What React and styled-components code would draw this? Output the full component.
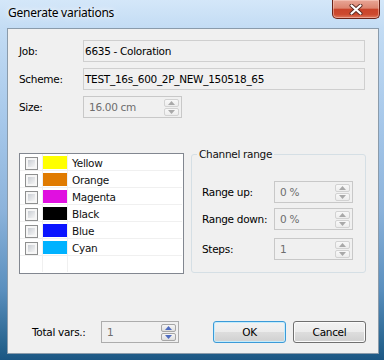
import styled, { createGlobalStyle } from 'styled-components';

const GlobalStyle = createGlobalStyle`
  html, body {
    margin: 0;
    padding: 0;
    background: #1a5582;
  }
  body {
    font-family: "DejaVu Sans", sans-serif;
    font-size: 10.5px;
    letter-spacing: -0.3px;
    color: #000;
  }
`;

const channels = [
  { name: 'Yellow', color: '#ffff00' },
  { name: 'Orange', color: '#e07b00' },
  { name: 'Magenta', color: '#e010e0' },
  { name: 'Black', color: '#000000' },
  { name: 'Blue', color: '#0a14ff' },
  { name: 'Cyan', color: '#00b2ff' },
];

const Window = styled.div`
  width: 384px;
  height: 360px;
  display: flex;
  flex-direction: column;
  overflow: hidden;
  background: linear-gradient(
    180deg,
    #d4e7f9 0px,
    #c3dcf4 28px,
    #a7c8ea 120px,
    #8cb3db 210px,
    #5a8fbe 290px,
    #27648f 345px,
    #1b5683 360px
  );
`;

const TitleBar = styled.div`
  height: 28px;
  flex-shrink: 0;
  display: flex;
  align-items: flex-start;
`;

const Title = styled.div`
  margin: 5px 0 0 8px;
  font-family: "Noto Sans", sans-serif;
  font-size: 12px;
  line-height: 16px;
  letter-spacing: -0.25px;
  text-shadow: 0 0 8px rgba(255, 255, 255, 0.9), 0 0 4px rgba(255, 255, 255, 0.8);
`;

const CloseButton = styled.div`
  margin-left: auto;
  margin-right: 4px;
  width: 48px;
  height: 19px;
  box-sizing: border-box;
  border: 1px solid #6a2318;
  border-top: none;
  border-radius: 0 0 5px 5px;
  background: linear-gradient(180deg, #e8a696 0%, #dc8570 45%, #c9442b 52%, #cd4a2f 80%, #de7a60 100%);
  box-shadow: inset 0 0 0 1px rgba(255, 220, 210, 0.45);
  display: flex;
  align-items: center;
  justify-content: center;
`;

const Client = styled.div`
  flex: 1;
  margin: 0 5px 6px 7px;
  border: 1px solid #8a9bab;
  background: #f0f0f0;
  display: flex;
  flex-direction: column;
  padding: 11px 12px 10px 11px;
`;

const FormGrid = styled.div`
  display: grid;
  grid-template-columns: 64px 1fr;
  row-gap: 6px;
  align-items: center;
`;

const Label = styled.div`
  line-height: 14px;
  width: ${p => (p.$w ? `${p.$w}px` : 'auto')};
  flex-shrink: 0;
`;

const ReadField = styled.div`
  height: 22px;
  box-sizing: border-box;
  border: 1px solid #cfcfcf;
  background: #f0f0f0;
  display: flex;
  align-items: center;
  padding-left: 1px;
  line-height: 14px;
  margin-right: 1px;
`;

const SpinField = styled.div`
  height: 22px;
  width: ${p => p.$w}px;
  box-sizing: border-box;
  border: 1px solid ${p => (p.$active ? '#acacac' : '#c8c8c8')};
  background: #f0f0f0;
  display: flex;
  align-items: center;
  padding-left: 5px;
  flex-shrink: 0;
`;

const SpinValue = styled.span`
  color: #6d6d6d;
  line-height: 14px;
`;

const SpinButtons = styled.div`
  margin-left: auto;
  margin-right: 2px;
  display: flex;
  flex-direction: column;
  gap: 1px;
`;

const SpinBtn = styled.div`
  width: 15px;
  height: 8px;
  box-sizing: border-box;
  border: 1px solid ${p => (p.$active ? '#a6a6a6' : '#d2d2d2')};
  border-radius: 2px;
  background: ${p =>
    p.$active ? 'linear-gradient(#f6f6f6, #dedede)' : 'linear-gradient(#f8f8f8, #ededed)'};
  display: flex;
  align-items: center;
  justify-content: center;
`;

const Arrow = ({ up, active }) => (
  <svg width="7" height="4" viewBox="0 0 7 4">
    <path d={up ? 'M0 4 L3.5 0 L7 4 Z' : 'M0 0 L7 0 L3.5 4 Z'} fill={active ? '#4f6cc0' : '#a9a9a9'} />
  </svg>
);

const Spin = ({ value, w, active }) => (
  <SpinField $w={w} $active={active}>
    <SpinValue>{value}</SpinValue>
    <SpinButtons>
      <SpinBtn $active={active}>
        <Arrow up active={active} />
      </SpinBtn>
      <SpinBtn $active={active}>
        <Arrow active={active} />
      </SpinBtn>
    </SpinButtons>
  </SpinField>
);

const Middle = styled.div`
  display: flex;
  gap: 7px;
  margin-top: 30px;
  align-items: flex-start;
`;

const ListBox = styled.div`
  width: 165px;
  height: 121px;
  margin-top: 5px;
  box-sizing: border-box;
  border: 1px solid #828790;
  background: #fff;
  display: flex;
  flex-direction: column;
`;

const ListRow = styled.div`
  display: grid;
  grid-template-columns: 23px 25px 1fr;
  height: ${p => (p.$filler ? 'auto' : '17px')};
  flex: ${p => (p.$filler ? 1 : 'none')};
  box-sizing: border-box;
  border-bottom: 1px solid ${p => (p.$filler ? 'transparent' : '#f0f0f0')};
  margin-right: 1px;
`;

const Cell = styled.div`
  border-right: ${p => (p.$line ? '1px solid #f0f0f0' : 'none')};
  display: flex;
  align-items: flex-start;
`;

const Check = styled.span`
  width: 13px;
  height: 13px;
  box-sizing: border-box;
  margin: 3px 0 0 5px;
  border: 1px solid #8e8f8f;
  padding: 2px;
  background: linear-gradient(135deg, #c9cdd3, #f5f5f5) content-box, #f6f6f6;
`;

const Swatch = styled.span`
  width: 24px;
  height: 13px;
  margin-top: 2px;
  background: ${p => p.$color};
`;

const ChannelName = styled.span`
  padding: 2px 0 0 4px;
  line-height: 14px;
  color: #111;
`;

const Group = styled.fieldset`
  flex: 1;
  height: 125px;
  margin: 0;
  padding: 0;
  min-width: 0;
  box-sizing: border-box;
  border: 1px solid #d5dfe5;
  border-radius: 3px;
`;

const Legend = styled.legend`
  margin-left: 5px;
  padding: 0 2px;
  line-height: 13px;
  color: #111;
`;

const GroupBody = styled.div`
  padding: 20px 0 0 10px;
  display: flex;
  flex-direction: column;
  gap: 5px;
`;

const GroupRow = styled.div`
  display: flex;
  align-items: center;
  margin-top: ${p => p.$mt || 0}px;
`;

const Footer = styled.div`
  margin-top: auto;
  display: flex;
  align-items: center;
  padding-left: 13px;
`;

const Button = styled.div`
  width: 73px;
  height: 22px;
  box-sizing: border-box;
  border: 1px solid ${p => (p.$default ? '#3b9ad8' : '#707070')};
  border-radius: 3px;
  box-shadow: inset 0 0 0 1px ${p => (p.$default ? '#c4ecfc' : '#fbfbfb')};
  background: linear-gradient(180deg, #f3f3f3 0%, #ececec 48%, #dddddd 52%, #d0d0d0 100%);
  display: flex;
  align-items: center;
  justify-content: center;
  line-height: 14px;
  margin-left: ${p => (p.$push ? 'auto' : '7px')};
`;

export default function App() {
  return (
    <>
      <GlobalStyle />
      <Window>
        <TitleBar>
          <Title>Generate variations</Title>
          <CloseButton>
            <svg width="14" height="11" viewBox="0 0 14 11">
              <path d="M2.5 1.5 L11.5 9.5 M11.5 1.5 L2.5 9.5" stroke="#5a2a22" strokeWidth="4" strokeLinecap="round" />
              <path d="M2.5 1.5 L11.5 9.5 M11.5 1.5 L2.5 9.5" stroke="#ffffff" strokeWidth="2.2" strokeLinecap="round" />
            </svg>
          </CloseButton>
        </TitleBar>
        <Client>
          <FormGrid>
            <Label>Job:</Label>
            <ReadField>6635 - Coloration</ReadField>
            <Label>Scheme:</Label>
            <ReadField>TEST_16s_600_2P_NEW_150518_65</ReadField>
            <Label>Size:</Label>
            <Spin value="16.00 cm" w={99} />
          </FormGrid>

          <Middle>
            <ListBox>
              {channels.map(c => (
                <ListRow key={c.name}>
                  <Cell $line>
                    <Check />
                  </Cell>
                  <Cell $line>
                    <Swatch $color={c.color} />
                  </Cell>
                  <Cell>
                    <ChannelName>{c.name}</ChannelName>
                  </Cell>
                </ListRow>
              ))}
              <ListRow $filler>
                <Cell $line />
                <Cell $line />
                <Cell />
              </ListRow>
            </ListBox>

            <Group>
              <Legend>Channel range</Legend>
              <GroupBody>
                <GroupRow>
                  <Label $w={72}>Range up:</Label>
                  <Spin value="0 %" w={79} />
                </GroupRow>
                <GroupRow>
                  <Label $w={72}>Range down:</Label>
                  <Spin value="0 %" w={79} />
                </GroupRow>
                <GroupRow $mt={3}>
                  <Label $w={72}>Steps:</Label>
                  <Spin value="1" w={79} />
                </GroupRow>
              </GroupBody>
            </Group>
          </Middle>

          <Footer>
            <Label $w={69}>Total vars.:</Label>
            <Spin value="1" w={78} active />
            <Button $default $push>OK</Button>
            <Button>Cancel</Button>
          </Footer>
        </Client>
      </Window>
    </>
  );
}
